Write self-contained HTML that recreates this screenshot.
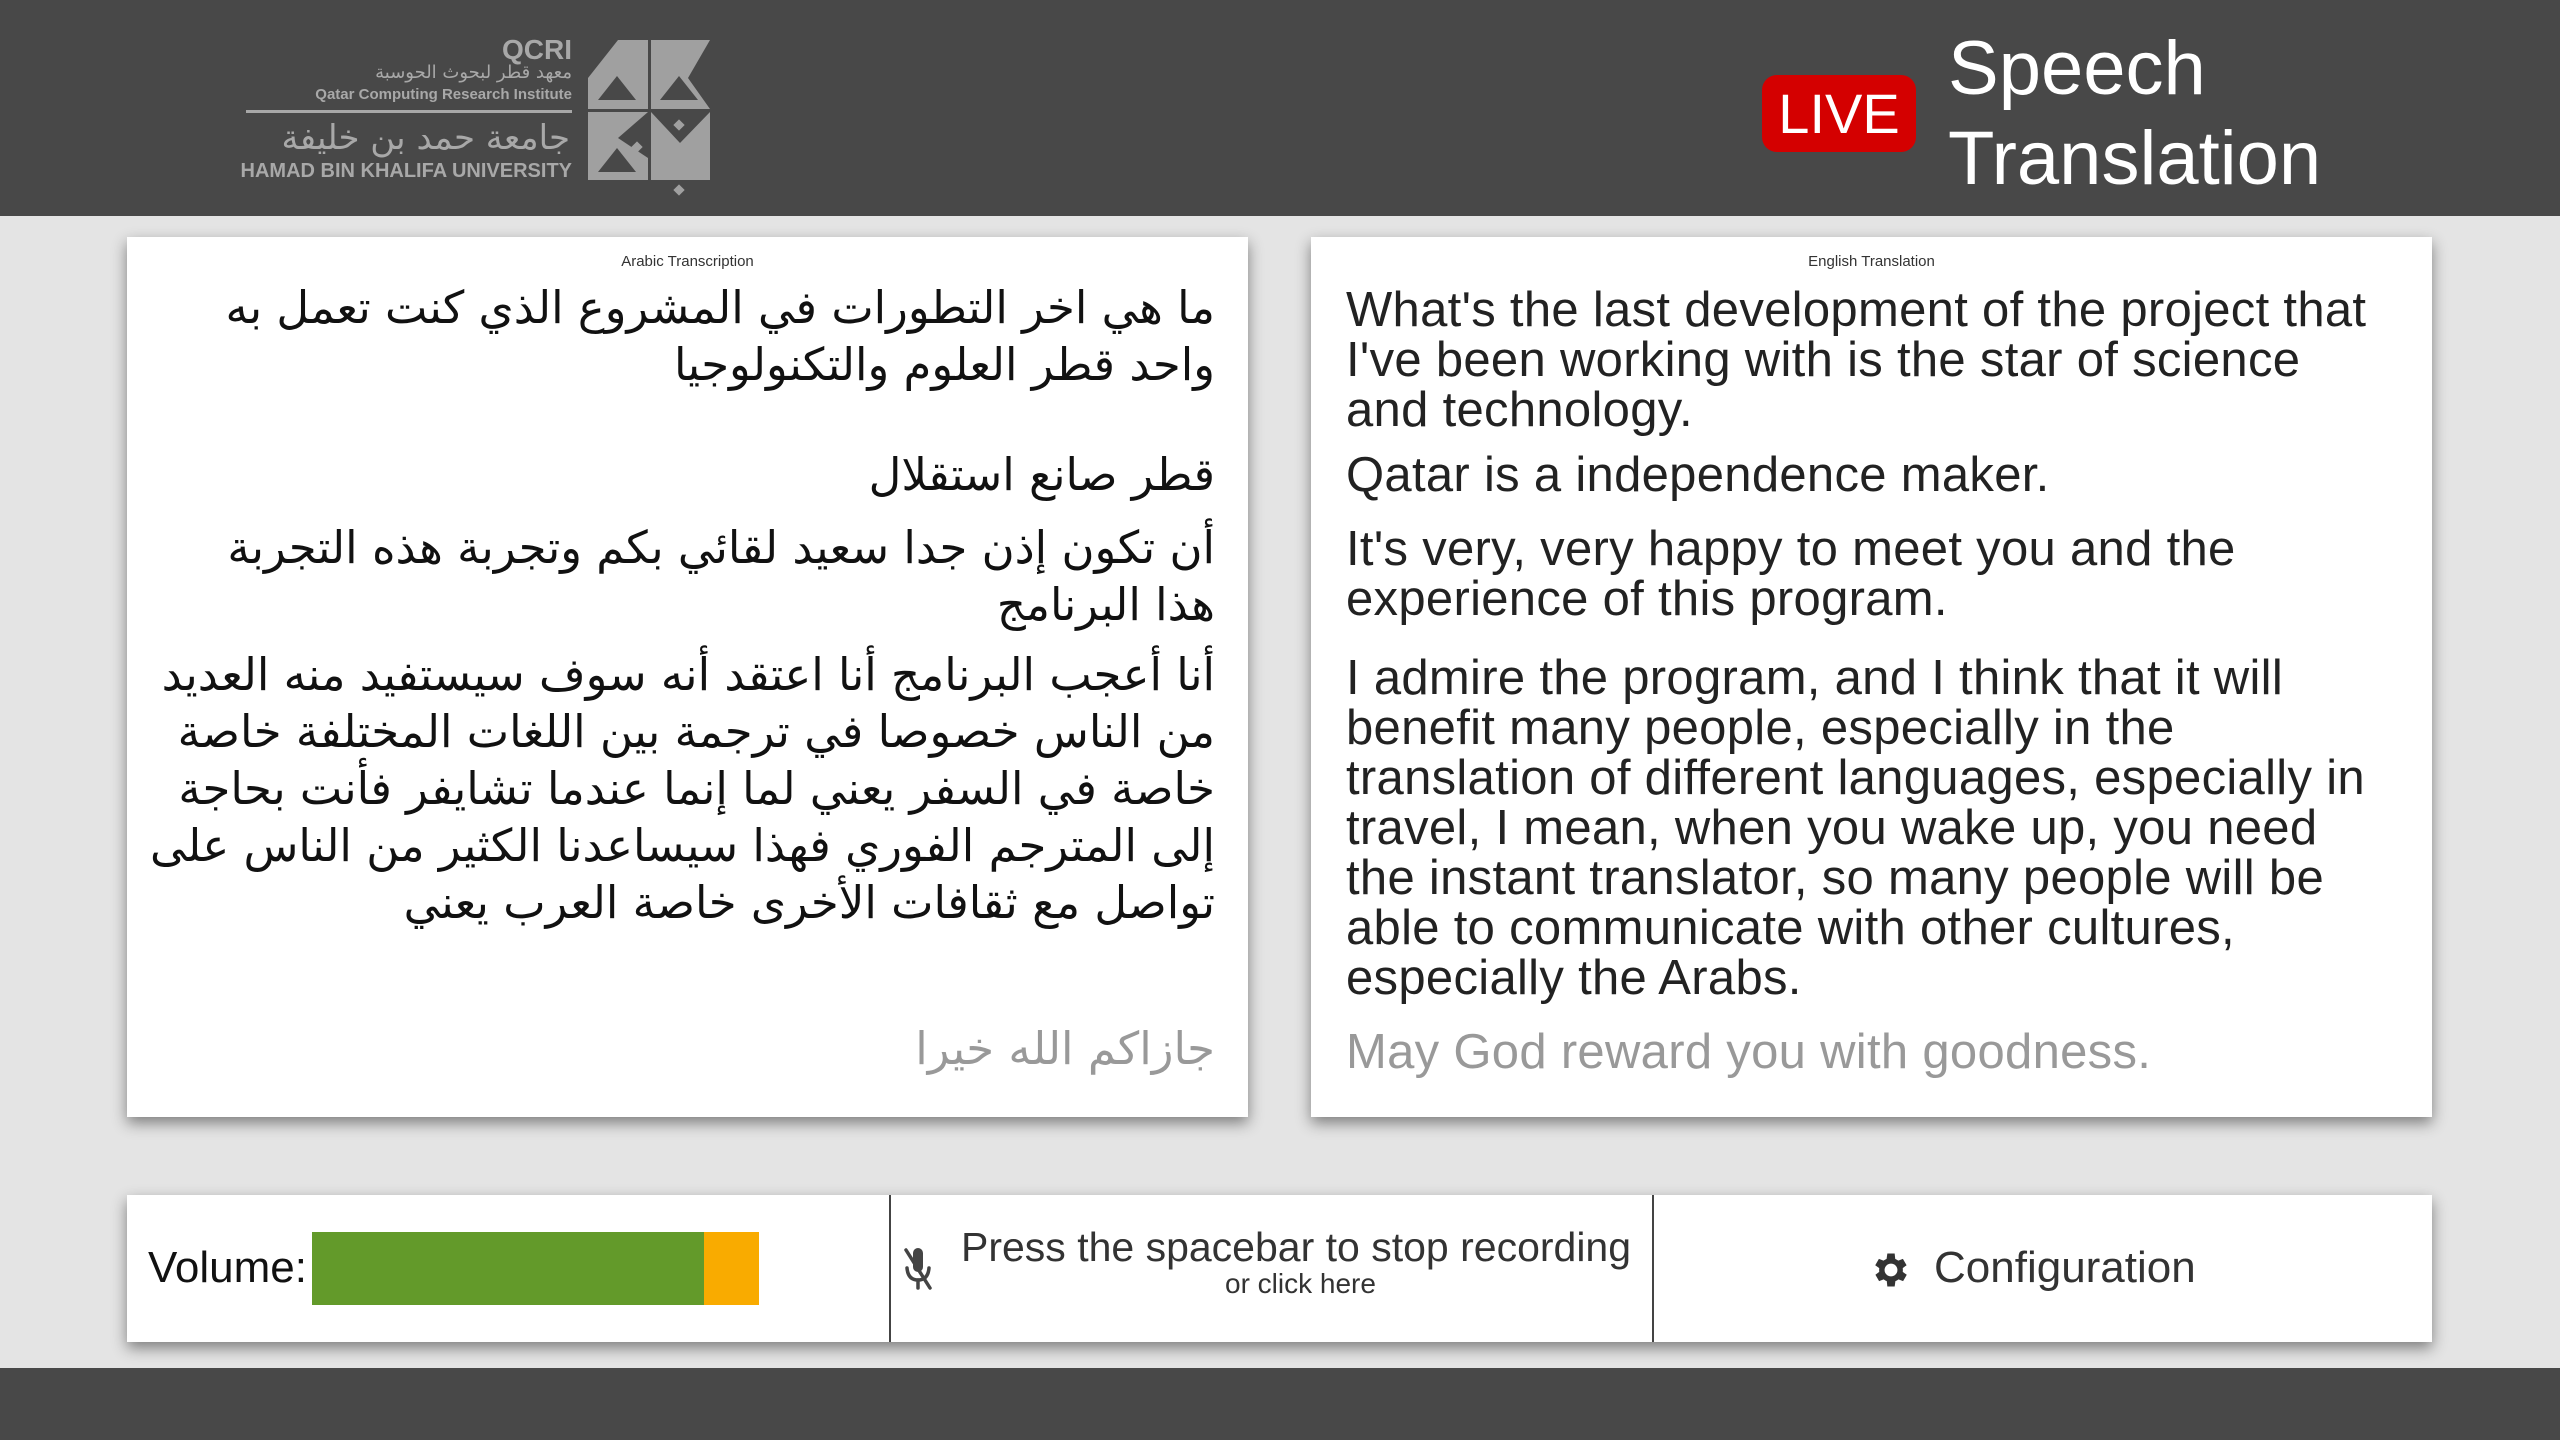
<!DOCTYPE html>
<html><head><meta charset="utf-8"><style>
*{margin:0;padding:0;box-sizing:border-box}
body{width:2560px;height:1440px;background:#e4e4e4;position:relative;overflow:hidden;font-family:"Liberation Sans",sans-serif}
.hdr{position:absolute;left:0;top:0;width:2560px;height:216px;background:#484848}
.ftr{position:absolute;left:0;top:1368px;width:2560px;height:72px;background:#484848}
.card{position:absolute;background:#fff;box-shadow:0 6px 14px rgba(0,0,0,.45)}
.lbl{position:absolute;top:253px;font-size:15px;color:#333;text-align:center}
.en{position:absolute;left:1346px;font-size:49px;line-height:50px;color:#222;white-space:nowrap;letter-spacing:0.3px}
.ar{position:absolute;right:1345px;direction:rtl;text-align:right;font-family:"DejaVu Sans",sans-serif;font-size:45px;line-height:57px;color:#111;white-space:nowrap}
.g{color:#999}
.t{position:absolute;white-space:nowrap}
</style></head><body>
<div class="hdr"></div>
<div class="t" style="right:1988px;top:34px;font-size:28px;font-weight:bold;color:#a8a8a8">QCRI</div>
<div class="t" style="right:1988px;top:62px;font-size:18px;color:#a8a8a8;font-family:'DejaVu Sans',sans-serif">معهد قطر لبحوث الحوسبة</div>
<div class="t" style="right:1988px;top:86px;font-size:15px;font-weight:bold;color:#a8a8a8">Qatar Computing Research Institute</div>
<div style="position:absolute;left:246px;top:110px;width:326px;height:3px;background:#a8a8a8"></div>
<div class="t" style="right:1990px;top:118px;font-size:34px;color:#a8a8a8;font-family:'DejaVu Sans',sans-serif">جامعة حمد بن خليفة</div>
<div class="t" style="right:1988px;top:160px;font-size:20px;font-weight:bold;color:#a8a8a8">HAMAD BIN KHALIFA UNIVERSITY</div>
<svg style="position:absolute;left:588px;top:38px" width="146" height="160" viewBox="0 0 146 160">
<g fill="#a0a0a0">
<path d="M0 2 L60 2 L60 71 L0 71 Z M10 62 L48 62 L29 38 Z" fill-rule="evenodd"/>
<path d="M63 2 L122 2 L122 71 L63 71 Z M72 62 L110 62 L91 38 Z" fill-rule="evenodd"/>
<path d="M0 74 L60 74 L60 142 L0 142 Z M10 134 L48 134 L29 110 Z" fill-rule="evenodd"/>
<path d="M63 74 L122 74 L122 142 L63 142 Z" />
<path d="M122 2 L122 71 L100 40 Z" fill="#484848"/>
<path d="M63 74 L92 105 L122 74 Z" fill="#484848"/>
<path d="M60 74 L30 100 L60 120 Z" fill="#484848"/>
<path d="M0 2 L0 40 L30 2 Z" fill="#484848"/>
<rect x="87" y="83" width="8" height="8" transform="rotate(45 91 87)"/>
<rect x="45" y="105" width="8" height="8" transform="rotate(45 49 109)"/>
<rect x="87" y="148" width="8" height="8" transform="rotate(45 91 152)"/>
</g></svg>
<div style="position:absolute;left:1762px;top:75px;width:154px;height:77px;background:#d40000;border-radius:15px;color:#fff;font-size:56px;line-height:77px;text-align:center">LIVE</div>
<div class="t" style="left:1948px;top:24px;font-size:76px;color:#fff;line-height:90px">Speech</div>
<div class="t" style="left:1948px;top:114px;font-size:76px;color:#fff;line-height:90px">Translation</div>

<div class="card" style="left:127px;top:237px;width:1121px;height:880px"></div>
<div class="card" style="left:1311px;top:237px;width:1121px;height:880px"></div>
<div class="lbl" style="left:127px;width:1121px">Arabic Transcription</div>
<div class="lbl" style="left:1311px;width:1121px">English Translation</div>

<div class="ar" style="top:279px">ما هي اخر التطورات في المشروع الذي كنت تعمل به<br>واحد قطر العلوم والتكنولوجيا</div>
<div class="ar" style="top:446px">قطر صانع استقلال</div>
<div class="ar" style="top:519px">أن تكون إذن جدا سعيد لقائي بكم وتجربة هذه التجربة<br>هذا البرنامج</div>
<div class="ar" style="top:646px">أنا أعجب البرنامج أنا اعتقد أنه سوف سيستفيد منه العديد<br>من الناس خصوصا في ترجمة بين اللغات المختلفة خاصة<br>خاصة في السفر يعني لما إنما عندما تشايفر فأنت بحاجة<br>إلى المترجم الفوري فهذا سيساعدنا الكثير من الناس على<br>تواصل مع ثقافات الأخرى خاصة العرب يعني</div>
<div class="ar g" style="top:1020px">جازاكم الله خيرا</div>

<div class="en" style="top:285px">What's the last development of the project that<br>I've been working with is the star of science<br>and technology.</div>
<div class="en" style="top:450px">Qatar is a independence maker.</div>
<div class="en" style="top:524px">It's very, very happy to meet you and the<br>experience of this program.</div>
<div class="en" style="top:653px">I admire the program, and I think that it will<br>benefit many people, especially in the<br>translation of different languages, especially in<br>travel, I mean, when you wake up, you need<br>the instant translator, so many people will be<br>able to communicate with other cultures,<br>especially the Arabs.</div>
<div class="en g" style="top:1027px">May God reward you with goodness.</div>

<div class="card" style="left:127px;top:1195px;width:2305px;height:147px"></div>
<div style="position:absolute;left:889px;top:1195px;width:2px;height:147px;background:#444"></div>
<div style="position:absolute;left:1652px;top:1195px;width:2px;height:147px;background:#444"></div>
<div class="t" style="left:148px;top:1243px;font-size:44px;color:#111">Volume:</div>
<div style="position:absolute;left:312px;top:1232px;width:392px;height:73px;background:#639a2a"></div>
<div style="position:absolute;left:704px;top:1232px;width:55px;height:73px;background:#f9ab00"></div>
<svg style="position:absolute;left:903px;top:1246px" width="30" height="46" viewBox="0 0 30 46"><g stroke="#444" stroke-width="3.5" fill="none" stroke-linecap="round"><path d="M4 22 Q5 34 15 34 Q25 34 26 22"/><path d="M15 34 V42"/><path d="M3 4 L27 42"/></g><rect x="10" y="2" width="10" height="24" rx="5" fill="#444"/></svg>
<div class="t" style="left:961px;top:1224px;font-size:41px;color:#333">Press the spacebar to stop recording</div>
<div class="t" style="left:1225px;top:1268px;font-size:28px;color:#333">or click here</div>
<svg style="position:absolute;left:1869px;top:1248px" width="44" height="44" viewBox="0 0 24 24"><path fill="#333" d="M19.4 13a7.5 7.5 0 0 0 0-2l2.1-1.6-2-3.5-2.5 1a7.7 7.7 0 0 0-1.7-1L15 3h-4l-.4 2.9a7.7 7.7 0 0 0-1.700 1l-2.5-1-2 3.5L6.6 11a7.5 7.5 0 0 0 0 2l-2.1 1.6 2 3.5 2.5-1a7.7 7.7 0 0 0 1.7 1L11 21h4l.4-2.9a7.7 7.7 0 0 0 1.7-1l2.5 1 2-3.5zM13 15.5A3.5 3.5 0 1 1 13 8.5a3.5 3.5 0 0 1 0 7z" transform="translate(-1 0)"/></svg>
<div class="t" style="left:1934px;top:1243px;font-size:44px;color:#333">Configuration</div>
<div class="ftr"></div>
</body></html>
